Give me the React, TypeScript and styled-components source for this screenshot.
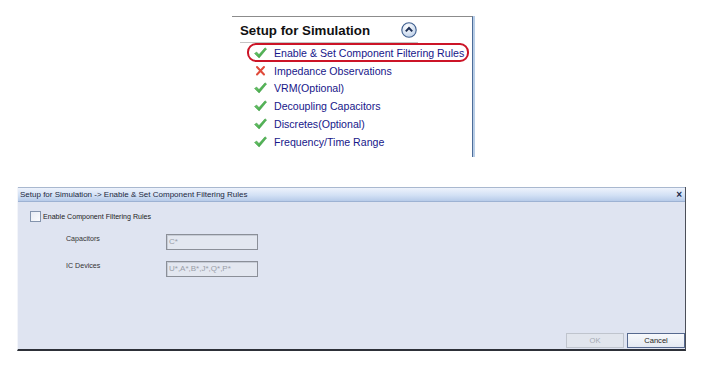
import styled, { createGlobalStyle } from "styled-components";

const GlobalStyle = createGlobalStyle`
  html, body {
    margin: 0;
    padding: 0;
    background: #ffffff;
  }
  body {
    font-family: "Liberation Sans", Arial, sans-serif;
  }
`;

const Page = styled.div`
  width: 702px;
  height: 369px;
  padding-top: 16px;
  box-sizing: border-box;
  display: flex;
  flex-direction: column;
`;

const StepsPanel = styled.div`
  margin-left: 232px;
  width: 240px;
  height: 140px;
  border-top: 1px solid #8c8c8c;
  border-right: 1px solid #4e6d99;
  box-shadow: 2px 0 0 #b8cde6;
`;

const PanelHeader = styled.div`
  margin-left: 8px;
  width: 178px;
  height: 25px;
  border-bottom: 1px solid #c4c4c4;
  display: flex;
  align-items: center;
  justify-content: space-between;
`;

const PanelTitle = styled.div`
  font-weight: bold;
  font-size: 13.3px;
  color: #111;
  padding-top: 2px;
`;

const CollapseButton = styled.div`
  width: 16px;
  height: 16px;
  margin-right: 1px;
  display: flex;
`;

const StepList = styled.div`
  padding-top: 1px;
  display: flex;
  flex-direction: column;
`;

const StepRow = styled.div<{ $marked?: boolean }>`
  position: relative;
  height: 17.8px;
  display: flex;
  align-items: center;
  padding-left: 22px;
  gap: 7px;
  font-size: 10.6px;
  white-space: nowrap;
  color: #17178a;

  &::after {
    content: "";
    display: ${(p) => (p.$marked ? "block" : "none")};
    position: absolute;
    left: 15px;
    top: -1px;
    width: 218px;
    height: 15px;
    border: 2px solid #cc1427;
    border-radius: 9px;
  }
`;

const StepIcon = styled.svg`
  width: 13px;
  height: 12px;
  flex: none;
`;

const Dialog = styled.div`
  margin-top: 30px;
  margin-left: 17px;
  width: 669px;
  height: 164px;
  display: flex;
  flex-direction: column;
  background: #dfe4f1;
  border-left: 1px solid #f3f5fa;
  border-right: 1px solid #4b4f58;
  border-bottom: 2px solid #2d3038;
  box-sizing: border-box;
`;

const TitleBar = styled.div`
  height: 13px;
  display: flex;
  align-items: center;
  justify-content: space-between;
  padding: 0 3px 0 2px;
  background: linear-gradient(#eef3fc, #d3e1f5 55%, #b7cbe9);
  border-top: 1px solid #a9b8cf;
  border-bottom: 1px solid #9db2d3;
  font-size: 8px;
  color: #1c2840;
`;

const CloseMark = styled.span`
  font-weight: bold;
  font-size: 10px;
  color: #1a2a4a;
  line-height: 1;
`;

const DialogBody = styled.div`
  flex: 1;
  display: flex;
  flex-direction: column;
  padding: 9px 0 0 12px;
`;

const CheckRow = styled.label`
  display: flex;
  align-items: center;
  gap: 2px;
  font-size: 7.1px;
  color: #222;
  height: 11px;
`;

const CheckBox = styled.span`
  width: 9px;
  height: 9px;
  border: 1px solid #8494ad;
  background: linear-gradient(135deg, #e8ecf4, #fbfcfe);
`;

const FieldGrid = styled.div`
  margin-top: 12px;
  margin-left: 36px;
  display: grid;
  grid-template-columns: 100px 92px;
  row-gap: 11px;
  align-items: center;
`;

const FieldLabel = styled.span`
  font-size: 7.1px;
  color: #333;
  padding-bottom: 6px;
`;

const FieldInput = styled.div`
  height: 16px;
  box-sizing: border-box;
  border: 1px solid #8b8f98;
  box-shadow: inset 1px 1px 0 #c7ccd6;
  background: #e3e7f0;
  font-size: 8px;
  color: #9a9ea8;
  padding: 2px 2px 0;
`;

const ButtonRow = styled.div`
  margin-top: auto;
  margin-bottom: 1px;
  align-self: flex-end;
  display: flex;
  gap: 3px;
`;

const DialogButton = styled.div<{ $disabled?: boolean }>`
  width: 58px;
  height: 15px;
  box-sizing: border-box;
  display: flex;
  align-items: center;
  justify-content: center;
  font-size: 7.6px;
  color: ${(p) => (p.$disabled ? "#a6abb4" : "#222")};
  border: 1px solid ${(p) => (p.$disabled ? "#bfc4cd" : "#56698f")};
  background: ${(p) =>
    p.$disabled ? "#e1e5ed" : "linear-gradient(#f7f9fc, #e4e9f2)"};
`;

const CheckIcon = () => (
  <StepIcon viewBox="0 0 13 12">
    <defs>
      <linearGradient id="chk" x1="0" y1="0" x2="1" y2="1">
        <stop offset="0" stopColor="#7fd27c" />
        <stop offset="1" stopColor="#2f9a36" />
      </linearGradient>
    </defs>
    <path
      d="M0.5 6.5 L2.6 5 L5 7.6 L11 0.8 L12.6 2 L5.1 11 Z"
      fill="url(#chk)"
      stroke="#3e9b44"
      strokeWidth="0.5"
      strokeLinejoin="round"
    />
  </StepIcon>
);

const CrossIcon = () => (
  <StepIcon viewBox="0 0 13 12">
    <path
      d="M3 2 L10 9.5 M10 2 L3 9.5"
      stroke="#e04a3a"
      strokeWidth="2"
      strokeLinecap="round"
    />
  </StepIcon>
);

const steps = [
  { label: "Enable & Set Component Filtering Rules", ok: true, marked: true },
  { label: "Impedance Observations", ok: false },
  { label: "VRM(Optional)", ok: true },
  { label: "Decoupling Capacitors", ok: true },
  { label: "Discretes(Optional)", ok: true },
  { label: "Frequency/Time Range", ok: true },
];

export default function App() {
  return (
    <Page>
      <GlobalStyle />
      <StepsPanel>
        <PanelHeader>
          <PanelTitle>Setup for Simulation</PanelTitle>
          <CollapseButton>
            <svg width="16" height="16" viewBox="0 0 16 16">
              <defs>
                <radialGradient id="cb" cx="0.4" cy="0.3" r="0.8">
                  <stop offset="0" stopColor="#ffffff" />
                  <stop offset="1" stopColor="#b9cde8" />
                </radialGradient>
              </defs>
              <circle cx="8" cy="8" r="7.2" fill="url(#cb)" stroke="#3f5f8f" strokeWidth="1.1" />
              <path d="M4.8 9.4 L8 6 L11.2 9.4" fill="none" stroke="#1d2f55" strokeWidth="2" />
            </svg>
          </CollapseButton>
        </PanelHeader>
        <StepList>
          {steps.map((s) => (
            <StepRow key={s.label} $marked={s.marked}>
              {s.ok ? <CheckIcon /> : <CrossIcon />}
              <span>{s.label}</span>
            </StepRow>
          ))}
        </StepList>
      </StepsPanel>

      <Dialog>
        <TitleBar>
          <span>Setup for Simulation -&gt; Enable &amp; Set Component Filtering Rules</span>
          <CloseMark>×</CloseMark>
        </TitleBar>
        <DialogBody>
          <CheckRow>
            <CheckBox />
            Enable Component Filtering Rules
          </CheckRow>
          <FieldGrid>
            <FieldLabel>Capacitors</FieldLabel>
            <FieldInput>C*</FieldInput>
            <FieldLabel>IC Devices</FieldLabel>
            <FieldInput>U*,A*,B*,J*,Q*,P*</FieldInput>
          </FieldGrid>
          <ButtonRow>
            <DialogButton $disabled>OK</DialogButton>
            <DialogButton>Cancel</DialogButton>
          </ButtonRow>
        </DialogBody>
      </Dialog>
    </Page>
  );
}
